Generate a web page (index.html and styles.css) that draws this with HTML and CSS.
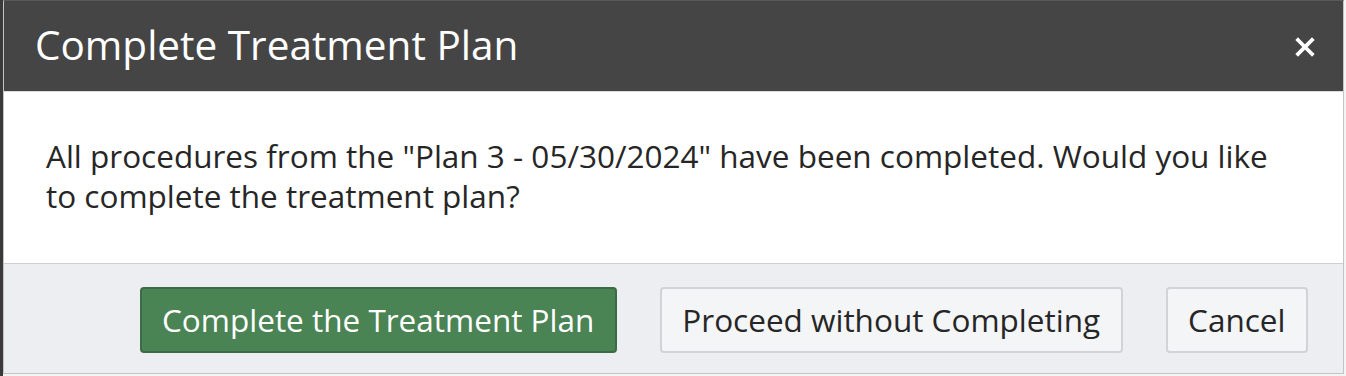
FILE: index.html
```html
<!DOCTYPE html>
<html>
<head>
<meta charset="utf-8">
<link rel="stylesheet" href="styles.css">
</head>
<body>
<div class="modal">
  <div class="modal-header">
    <h1 class="modal-title">Complete Treatment Plan</h1>
    <button class="close" aria-label="Close">
      <svg width="20" height="20" viewBox="0 0 20 20"><path d="M3 3 L17 17 M17 3 L3 17" stroke="#fff" stroke-width="3.8" stroke-linecap="square"/></svg>
    </button>
  </div>
  <div class="modal-body">
    <p>All procedures from the "Plan 3 - 05/30/2024" have been completed. Would you like to complete the treatment plan?</p>
  </div>
  <div class="modal-footer">
    <button class="btn btn-success">Complete the Treatment Plan</button>
    <button class="btn btn-default">Proceed without Completing</button>
    <button class="btn btn-default">Cancel</button>
  </div>
</div>
</body>
</html>
```

FILE: styles.css
```css
html, body {
  margin: 0;
  padding: 0;
  height: 100%;
}
body {
  background: linear-gradient(to right, #3a3a3a 0 3px, #f4f4f4 3px);
  font-family: "Open Sans", "Noto Sans", sans-serif;
  overflow: hidden;
}
.modal {
  margin-left: 3px;
  width: 1339px;
  height: 372px;
  border: 1px solid #c4c4c4;
  border-top: 1px solid #5a5a5a;
  background: #fff;
  display: flex;
  flex-direction: column;
}
.modal-header {
  background: #454545;
  height: 90px;
  border-bottom: 1px solid #dcdcdc;
  display: flex;
  align-items: center;
  justify-content: space-between;
  padding: 0 28px 0 31px;
}
.modal-title {
  margin: 0;
  color: #fff;
  font-weight: 400;
  font-size: 40.5px;
  line-height: 1;
  padding-bottom: 2px;
}
.close {
  background: none;
  border: 0;
  padding: 0;
  width: 20px;
  height: 20px;
  display: flex;
  margin-top: 2px;
}
.modal-body {
  flex: 1;
  padding: 0 60px 0 42px;
  display: flex;
  align-items: center;
}
.modal-body p {
  margin: 0;
  font-size: 31.5px;
  line-height: 40px;
  color: #262626;
  padding-bottom: 3px;
}
.modal-footer {
  height: 110px;
  border-top: 1px solid #cfcfd2;
  background: #eceef1;
  display: flex;
  align-items: center;
  justify-content: flex-end;
  gap: 43px;
  padding: 0 35px 0 0;
  box-sizing: border-box;
}
.btn {
  font-family: "Open Sans", "Noto Sans", sans-serif;
  font-size: 31.5px;
  height: 66px;
  padding: 0 20.5px;
  border-radius: 4px;
  line-height: 1;
  margin-top: 2px;
}
.btn-success {
  background: #4a8354;
  border: 2px solid #3c6c45;
  color: #fff;
}
.btn-default {
  background: #f4f5f7;
  border: 2px solid #d2d3d6;
  color: #262626;
}
```
